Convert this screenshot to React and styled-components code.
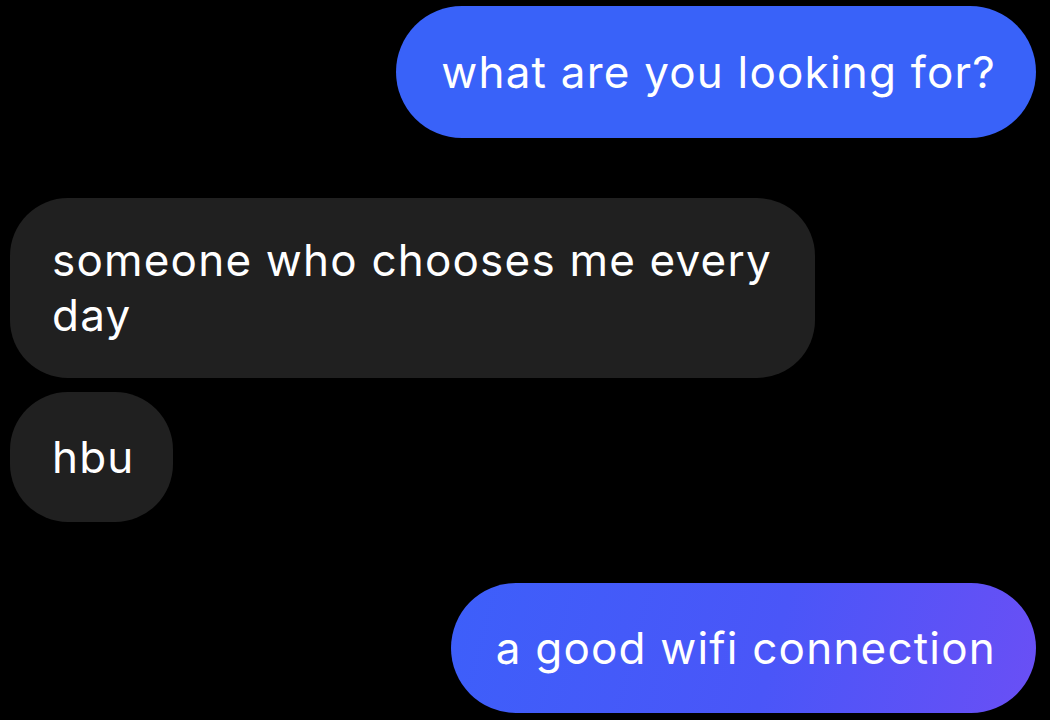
import React from "react";
import styled, { createGlobalStyle, css } from "styled-components";

const Global = createGlobalStyle`
  html, body {
    margin: 0;
    padding: 0;
    background: #000;
  }
  body {
    width: 1050px;
    height: 720px;
    overflow: hidden;
    font-family: Inter, Roboto, "Liberation Sans", Arial, sans-serif;
  }
`;

const Thread = styled.div`
  width: 1050px;
  height: 720px;
  box-sizing: border-box;
  padding: 6px 14px 0 10px;
  display: flex;
  flex-direction: column;
  background: #000;
`;

const Row = styled.div`
  display: flex;
  justify-content: ${(p) => (p.$mine ? "flex-end" : "flex-start")};
  margin-top: ${(p) => p.$gap || 0}px;
`;

const Bubble = styled.div`
  box-sizing: border-box;
  max-width: 805px;
  min-height: ${(p) => p.$h || 130}px;
  padding: 35px ${(p) => (p.$mine ? 40 : 38)}px 35px ${(p) => (p.$mine ? 45 : 42)}px;
  border-radius: 66px;
  color: #fff;
  font-size: 44px;
  font-weight: 400;
  line-height: 55px;
  letter-spacing: 1.2px;
  display: flex;
  align-items: center;
  ${(p) =>
    p.$mine
      ? css`
          background: ${p.$gradient
            ? "linear-gradient(105deg, #3d5ffa 0%, #4a56f8 55%, #6a4ff5 100%)"
            : "#3962f9"};
        `
      : css`
          background: #202020;
          border-radius: 58px;
        `}
`;

export default function App() {
  return (
    <>
      <Global />
      <Thread>
        <Row $mine>
          <Bubble $mine $h={132}>what are you looking for?</Bubble>
        </Row>
        <Row $gap={60}>
          <Bubble>someone who chooses me every day</Bubble>
        </Row>
        <Row $gap={14}>
          <Bubble>hbu</Bubble>
        </Row>
        <Row $mine $gap={61}>
          <Bubble $mine $gradient>a good wifi connection</Bubble>
        </Row>
      </Thread>
    </>
  );
}
